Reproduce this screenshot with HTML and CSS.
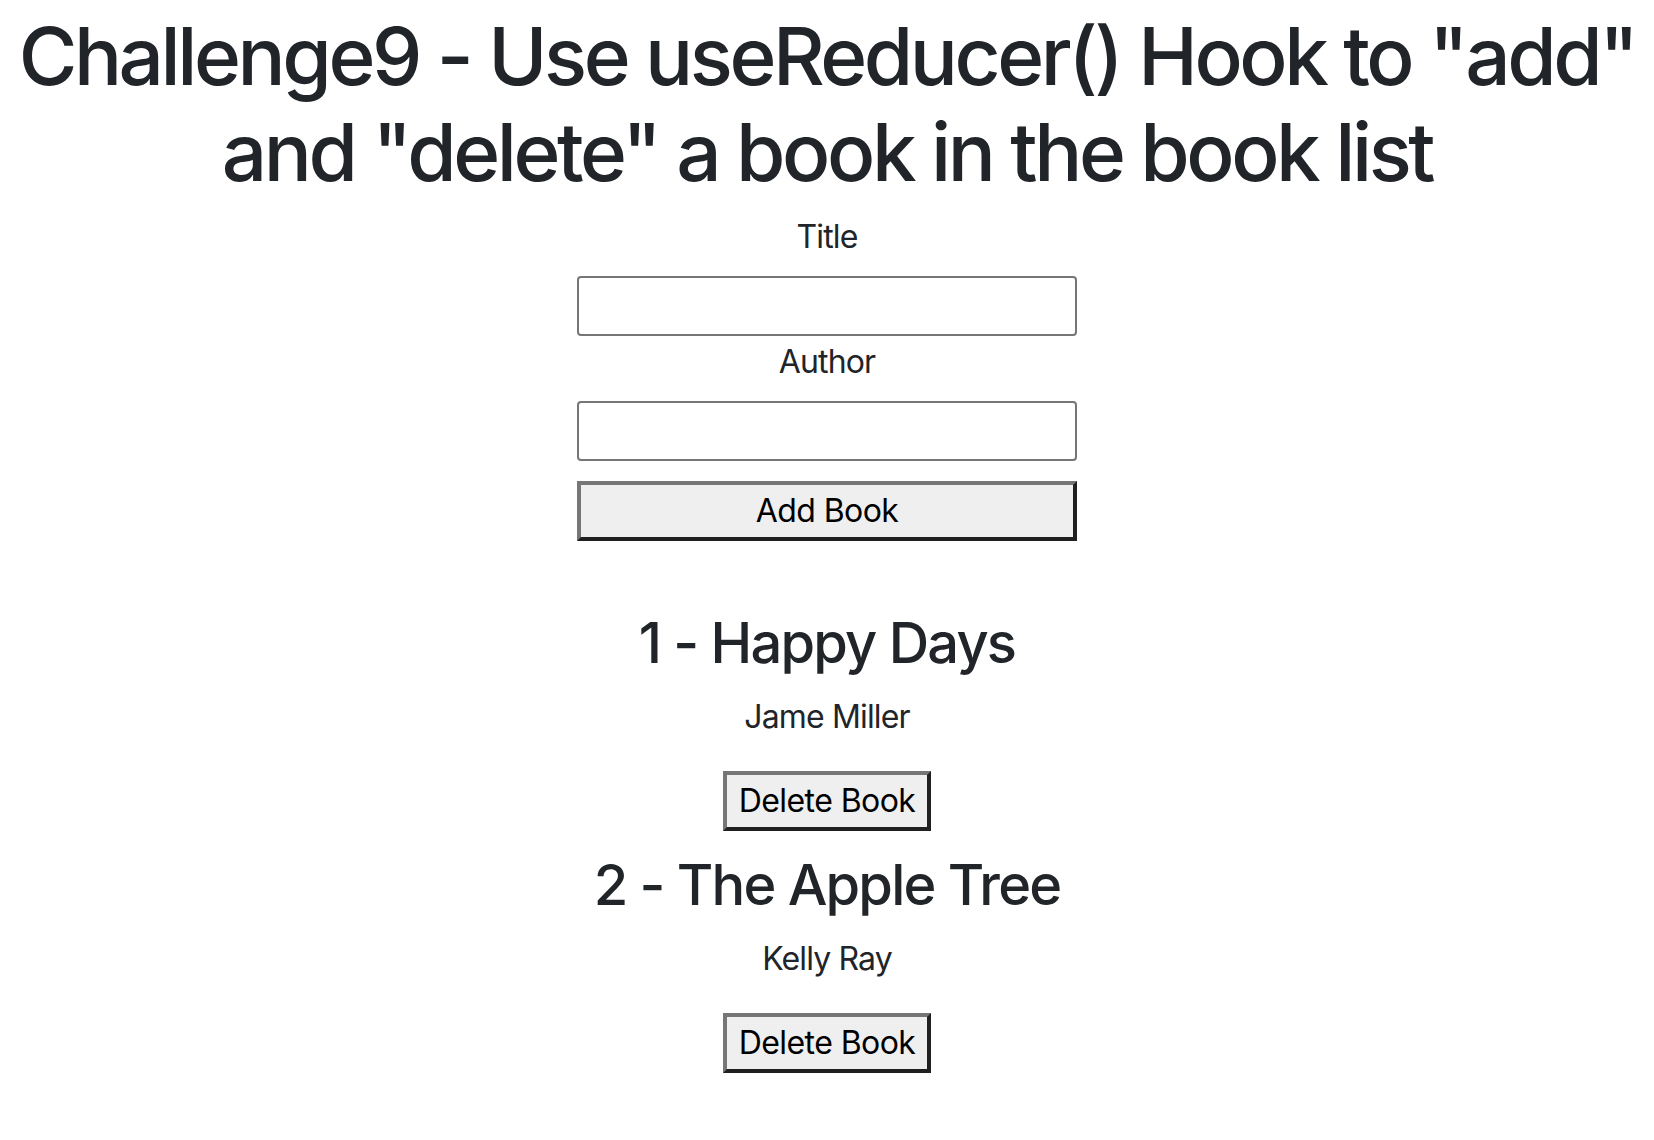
FILE: index.html
```html
<!DOCTYPE html>
<html lang="en">
<head>
<meta charset="utf-8">
<title>Challenge9</title>
<link rel="stylesheet" href="styles.css">
</head>
<body>
<div class="app">
  <h1 class="heading">Challenge9 - Use useReducer() Hook to "add" and "delete" a book in the book list</h1>
  <form class="book-form">
    <label class="field-label" for="title">Title</label>
    <input class="field-input" id="title" type="text">
    <label class="field-label field-label-next" for="author">Author</label>
    <input class="field-input" id="author" type="text">
    <button class="btn btn-add" type="button">Add Book</button>
  </form>
  <div class="book-list">
    <div class="book">
      <h3 class="book-title">1 - Happy Days</h3>
      <p class="book-author">Jame Miller</p>
      <button class="btn btn-delete" type="button">Delete Book</button>
    </div>
    <div class="book">
      <h3 class="book-title">2 - The Apple Tree</h3>
      <p class="book-author">Kelly Ray</p>
      <button class="btn btn-delete" type="button">Delete Book</button>
    </div>
  </div>
</div>
</body>
</html>
```
FILE: styles.css
```css
html, body {
  margin: 0;
  padding: 0;
  background: #ffffff;
}

body {
  font-family: Inter, "Noto Sans", "Liberation Sans", sans-serif;
  font-size: 32px;
  line-height: 48px;
  color: #212529;
  letter-spacing: -0.027em;
}

.app {
  display: flex;
  flex-direction: column;
  align-items: center;
  text-align: center;
}

.heading {
  font-size: 80px;
  font-weight: 500;
  line-height: 96px;
  letter-spacing: -0.043em;
  margin: 8px 0 13px;
  padding: 0 8px;
}

.book-form {
  display: flex;
  flex-direction: column;
  align-items: center;
  width: 500px;
}

.field-label {
  display: block;
  line-height: 48px;
}

.field-label-next {
  margin-top: 2px;
}

.field-input {
  display: block;
  box-sizing: border-box;
  width: 500px;
  height: 60px;
  margin-top: 15px;
  border: 2px solid #767676;
  border-radius: 4px;
  background: #ffffff;
  font: inherit;
  padding: 2px 4px;
}

.btn {
  box-sizing: border-box;
  border-style: solid;
  border-width: 4px;
  border-color: #767676 #202020 #202020 #767676;
  border-radius: 0;
  background: #efefef;
  color: #000000;
  font-family: inherit;
  font-size: 32px;
  line-height: 48px;
  letter-spacing: -0.018em;
  padding: 2px 12px;
  margin: 0;
}

.btn-add {
  width: 500px;
  height: 60px;
  margin-top: 20px;
}

.book-list {
  display: flex;
  flex-direction: column;
  align-items: center;
  margin-top: 67px;
}

.book {
  display: flex;
  flex-direction: column;
  align-items: center;
}

.book + .book {
  margin-top: 19px;
}

.book-title {
  font-size: 56px;
  font-weight: 500;
  line-height: 67px;
  letter-spacing: -0.032em;
  margin: 0 0 16px;
  padding-top: 2px;
}

.book-author {
  margin: 0 0 30px;
  line-height: 48px;
}

.btn-delete {
  height: 60px;
}
```
